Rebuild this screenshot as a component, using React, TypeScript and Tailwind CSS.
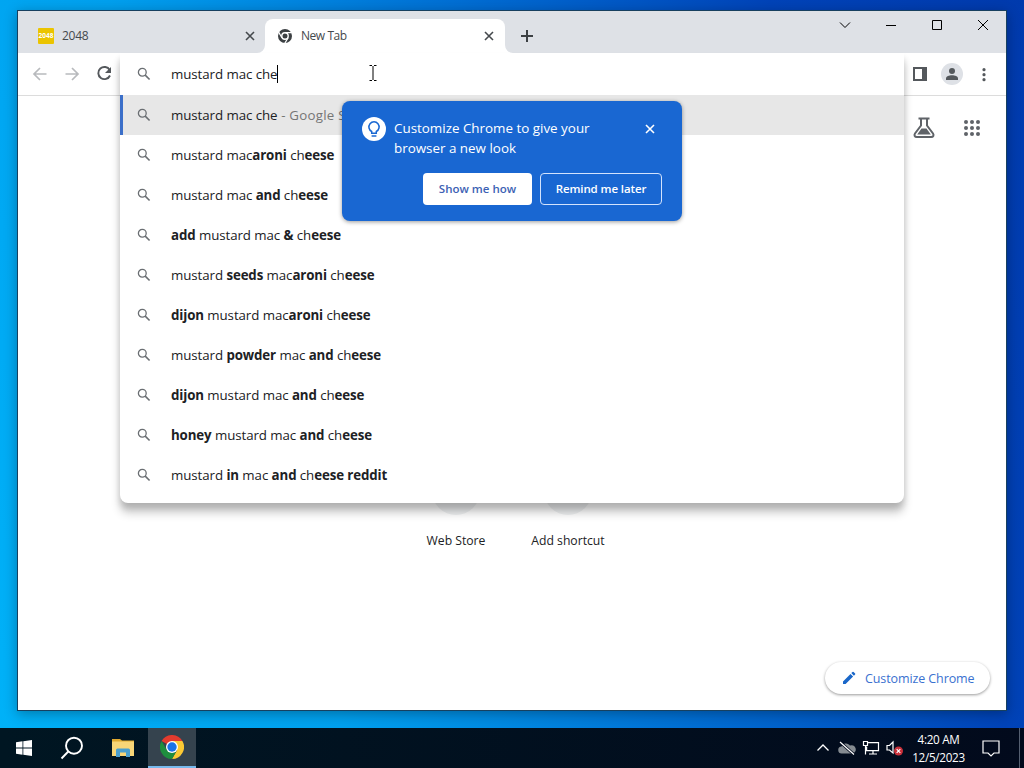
import type { ReactNode } from 'react'

type Part = string | { b: string }

const suggestions: Part[][] = [
  ['mustard mac', { b: 'aroni' }, ' ch', { b: 'eese' }],
  ['mustard mac ', { b: 'and' }, ' ch', { b: 'eese' }],
  [{ b: 'add' }, ' mustard mac ', { b: '&' }, ' ch', { b: 'eese' }],
  ['mustard ', { b: 'seeds' }, ' mac', { b: 'aroni' }, ' ch', { b: 'eese' }],
  [{ b: 'dijon' }, ' mustard mac', { b: 'aroni' }, ' ch', { b: 'eese' }],
  ['mustard ', { b: 'powder' }, ' mac ', { b: 'and' }, ' ch', { b: 'eese' }],
  [{ b: 'dijon' }, ' mustard mac ', { b: 'and' }, ' ch', { b: 'eese' }],
  [{ b: 'honey' }, ' mustard mac ', { b: 'and' }, ' ch', { b: 'eese' }],
  ['mustard ', { b: 'in' }, ' mac ', { b: 'and' }, ' ch', { b: 'eese reddit' }],
]

function SearchIcon() {
  return (
    <svg className="size-4 shrink-0" viewBox="0 0 16 16" fill="none" stroke="#6a6e72" strokeWidth="1.3">
      <circle cx="6.3" cy="6.2" r="3.9" />
      <path d="M9.2 9.1 13.6 13.5" strokeWidth="1.6" />
    </svg>
  )
}

function CloseIcon({ className = '' }: { className?: string }) {
  return (
    <svg className={`size-4 shrink-0 ${className}`} viewBox="0 0 16 16" fill="none" stroke="currentColor" strokeWidth="1.6">
      <path d="m4 4 8 8M12 4l-8 8" />
    </svg>
  )
}

function GreyChrome() {
  return (
    <svg className="size-4 shrink-0" viewBox="0 0 16 16">
      <circle cx="8" cy="8" r="7" fill="#3c4043" />
      <circle cx="8" cy="8" r="3.2" fill="#3c4043" stroke="#fff" strokeWidth="1.4" />
      <path d="M8 4.6h7M4.9 9.8 1.5 3.9M11.1 9.8 7.6 15.6" stroke="#fff" strokeWidth="1.2" />
    </svg>
  )
}

function ChromeLogo() {
  return (
    <svg className="size-6" viewBox="0 0 24 24">
      <path d="M12 12 1.6 6A12 12 0 0 1 22.4 6Z" fill="#e33b2e" />
      <path d="M12 6h10.4A12 12 0 0 1 12 24l5.2-9Z" fill="#fcc934" />
      <path d="M1.6 6 6.8 15 12 18l4.2-1.6L12 24A12 12 0 0 1 1.6 6Z" fill="#1e8e3e" />
      <circle cx="12" cy="12" r="6" fill="#fff" />
      <circle cx="12" cy="12" r="4.7" fill="#1a73e8" />
    </svg>
  )
}

function Caption({ children }: { children: ReactNode }) {
  return (
    <div className="flex w-[46px] justify-center pt-[6px]">
      <svg className="size-4" viewBox="0 0 16 16" fill="none" stroke="currentColor" strokeWidth="1">
        {children}
      </svg>
    </div>
  )
}

function TabStrip() {
  return (
    <div className="flex h-[42px] shrink-0 bg-[#dee1e6] text-[12px] text-[#45494d]">
      <div className="flex w-[247px] items-center pt-2 pr-[7px] pl-5">
        <div className="flex size-4 items-center justify-center overflow-hidden rounded-[1px] bg-[#ebc400] text-[6.5px] font-bold text-white">
          2048
        </div>
        <span className="ml-2 flex-1 tracking-[-0.25px]">2048</span>
        <CloseIcon />
      </div>
      <div className="relative mt-2 flex w-[240px] items-center rounded-t-lg bg-white pr-2 pl-3">
        <svg className="absolute bottom-0 -left-2 size-2" viewBox="0 0 8 8">
          <path d="M8 0v8H0a8 8 0 0 0 8-8Z" fill="#fff" />
        </svg>
        <svg className="absolute -right-2 bottom-0 size-2" viewBox="0 0 8 8">
          <path d="M0 0v8h8a8 8 0 0 1-8-8Z" fill="#fff" />
        </svg>
        <GreyChrome />
        <span className="ml-2 flex-1 tracking-[-0.45px]">New Tab</span>
        <CloseIcon />
      </div>
      <svg className="mt-[17px] ml-[14px] size-4" viewBox="0 0 16 16" stroke="#3c4043" strokeWidth="2">
        <path d="M8 2v12M2 8h12" />
      </svg>
      <div className="ml-auto flex h-7 text-black">
        <Caption>
          <path d="m3 5.5 5 5 5-5" />
        </Caption>
        <Caption>
          <path d="M3 8.5h10" />
        </Caption>
        <Caption>
          <path d="M3.5 3.5h9v9h-9z" />
        </Caption>
        <Caption>
          <path d="m3 3 10 10M13 3 3 13" />
        </Caption>
      </div>
    </div>
  )
}

function Toolbar() {
  return (
    <div className="flex h-[43px] shrink-0 items-center border-b border-[#dcdcdc] bg-white pl-[13px]">
      <svg className="size-[18px]" viewBox="0 0 18 18" fill="none" stroke="#b8babd" strokeWidth="1.7">
        <path d="M15.5 9H3M9 3 3 9l6 6" />
      </svg>
      <svg className="ml-[14px] size-[18px]" viewBox="0 0 18 18" fill="none" stroke="#b8babd" strokeWidth="1.7">
        <path d="M2.5 9H15M9 3l6 6-6 6" />
      </svg>
      <svg className="ml-[14px] size-[18px]" viewBox="0 0 18 18" fill="none" stroke="#54585c" strokeWidth="1.9">
        <path d="M14.7 5A6.1 6.1 0 1 0 15 10.5" />
        <path d="M16 2v6h-6Z" fill="#54585c" stroke="none" />
      </svg>
      <svg className="ml-auto h-[14px] w-[14px]" viewBox="0 0 14 14">
        <path d="M0 0h14v14H0zM2 2v10h7V2z" fill="#54585c" fillRule="evenodd" />
      </svg>
      <div className="ml-[14px] flex size-[22px] items-center justify-center rounded-full bg-[#dee1e6]">
        <svg className="size-3" viewBox="0 0 12 12" fill="#54585c">
          <circle cx="6" cy="3" r="3" />
          <path d="M0 12v-1.5C0 8.3 3 7.3 6 7.3s6 1 6 3.2V12Z" />
        </svg>
      </div>
      <svg className="mr-[14px] ml-[13px] size-4" viewBox="0 0 16 16" fill="#54585c">
        <circle cx="8" cy="3.7" r="1.6" />
        <circle cx="8" cy="8.7" r="1.6" />
        <circle cx="8" cy="13.7" r="1.6" />
      </svg>
    </div>
  )
}

function Omnibox() {
  return (
    <div className="absolute top-[42px] left-[102px] w-[784px] rounded-b-lg bg-white pb-2 text-[13.3px] tracking-[-0.07px] text-[#202124] shadow-[0_10px_10px_rgba(0,0,0,0.2),0_5px_6px_rgba(0,0,0,0.14)]">
      <div className="flex h-[42px] items-center pl-4">
        <SearchIcon />
        <span className="ml-[19px] pt-0.5 whitespace-nowrap">mustard mac che</span>
        <span className="h-[18px] w-px bg-black" />
      </div>
      <div className="flex h-10 items-center border-l-3 border-[#3b6fc9] bg-[#e7e7e7] pl-[13px]">
        <SearchIcon />
        <span className="ml-[19px] pt-0.5 whitespace-pre">
          mustard mac che<span className="tracking-[0.25px] text-[#757575]"> - Google Search</span>
        </span>
      </div>
      {suggestions.map((parts, i) => (
        <div key={i} className="flex h-10 items-center pl-4">
          <SearchIcon />
          <span className="ml-[19px] pt-0.5 whitespace-pre">
            {parts.map((p, j) =>
              typeof p === 'string' ? p : <b key={j} className="font-bold tracking-[-0.12px]">{p.b}</b>
            )}
          </span>
        </div>
      ))}
    </div>
  )
}

function Promo() {
  return (
    <div className="absolute top-[90px] left-[324px] h-[120px] w-[340px] rounded-lg bg-[#1967d2] px-5 pt-4 text-white shadow-[0_1px_4px_rgba(0,0,0,0.4)]">
      <div className="flex">
        <div className="flex size-6 items-center justify-center rounded-full bg-white">
          <svg className="size-5" viewBox="0 0 20 20" fill="none" stroke="#1967d2" strokeWidth="1.5">
            <path d="M7.7 12.5v1.7h4.6v-1.7a5.1 5.1 0 1 0-4.6 0Z" />
            <path d="M7.6 17h4.8" />
          </svg>
        </div>
        <p className="mt-px ml-2 flex-1 text-[13.4px] leading-5 whitespace-pre">{'Customize Chrome to give your\nbrowser a new look'}</p>
        <CloseIcon className="mt-1 mr-1" />
      </div>
      <div className="mt-[15px] flex justify-end gap-2 text-[11.5px] font-semibold">
        <div className="flex h-8 w-[109px] items-center justify-center rounded bg-white text-[#3c62b4]">
          Show me how
        </div>
        <div className="flex h-8 w-[122px] items-center justify-center rounded border border-[#d3e3fd] tracking-[-0.1px]">
          Remind me later
        </div>
      </div>
    </div>
  )
}

function Shortcut({ label }: { label: string }) {
  return (
    <div className="flex w-28 flex-col items-center">
      <div className="size-12 rounded-full bg-[#eff1f2]" />
      <span className="mt-[17px] leading-[18px] whitespace-nowrap">{label}</span>
    </div>
  )
}

function NewTabPage() {
  return (
    <div className="flex flex-1 flex-col bg-white text-[12.2px] text-[#202124]">
      <div className="flex items-center justify-end gap-6 pt-5 pr-[22px]">
        <svg className="size-6" viewBox="0 0 24 24" fill="none" stroke="#5f6368" strokeWidth="2">
          <path d="M6.5 2.5h11M9 3v6.5L3 17.5C1.8 19.5 2.8 21 4.8 21h14.4c2 0 3-1.5 1.8-3.500L15 9.5V3" />
          <path d="M9.5 12.5h5l4.3 6H5.2Z" fill="#5f6368" stroke="none" />
        </svg>
        <svg className="size-6" viewBox="0 0 24 24" fill="#5f6368">
          {[6, 12, 18].map((y) => [6, 12, 18].map((x) => <circle key={`${x}-${y}`} cx={x} cy={y} r="2" />))}
        </svg>
      </div>
      <div className="mt-[327px] ml-[382px] flex">
        <Shortcut label="Web Store" />
        <Shortcut label="Add shortcut" />
      </div>
      <div className="mt-auto mr-4 mb-4 flex h-8 w-[165px] items-center self-end rounded-full bg-white pl-4 text-[#3a71d0] shadow-[0_1px_3px_rgba(0,0,0,0.4)]">
        <svg className="size-4" viewBox="0 0 16 16" fill="#1a67c9">
          <path d="M2 11.4V14h2.6l7.5-7.5-2.6-2.6ZM10.3 3.1l2.6 2.6 1.2-1.2a.8.8 0 0 0 0-1.1l-1.5-1.5a.8.8 0 0 0-1.1 0Z" />
        </svg>
        <span className="ml-2 pt-[3px] text-[12.5px] tracking-[-0.1px] whitespace-nowrap">Customize Chrome</span>
      </div>
    </div>
  )
}

function Taskbar() {
  return (
    <div className="flex h-10 shrink-0 items-center bg-linear-to-r from-[#001622] to-[#020a1c] text-white">
      <div className="flex w-12 justify-center">
        <svg className="size-4" viewBox="0 0 16 16" fill="#fff">
          <path d="M0 2.2 6.5 1.3v6.3H0ZM7.3 1.2 16 0v7.6H7.3ZM0 8.4h6.5v6.3L0 13.8ZM7.3 8.4H16V16l-8.7-1.2Z" />
        </svg>
      </div>
      <div className="flex w-12 justify-center">
        <svg className="size-6" viewBox="0 0 24 24" fill="none" stroke="#fff" strokeWidth="1.9">
          <circle cx="14" cy="9.7" r="8" />
          <path d="M8.3 15.5 1.5 22.5" />
        </svg>
      </div>
      <div className="flex w-[52px] justify-center pl-[2px]">
        <svg className="h-5 w-[22px]" viewBox="0 0 22 20">
          <path d="M0 1h8l2 1.5h12V5H0Z" fill="#e0a92f" />
          <path d="M0 3.5h22V18H0Z" fill="#f8d677" />
          <path d="M4 19v-7q0-1.5 1.5-1.5h11q1.5 0 1.5 1.5v7h-4v-4.5H8V19Z" fill="#4a9fce" />
        </svg>
      </div>
      <div className="flex h-10 w-12 items-center justify-center border-b-2 border-[#76b9ed] bg-[#35434e]">
        <ChromeLogo />
      </div>
      <div className="ml-auto flex items-center">
        <svg className="h-4 w-[14px]" viewBox="0 0 14 16" fill="none" stroke="#fff" strokeWidth="1.3">
          <path d="m1.5 10.5 5.5-5.5 5.5 5.5" />
        </svg>
        <svg className="ml-2 h-4 w-[18px]" viewBox="0 0 18 16">
          <path d="M4 13.5a3.5 3.5 0 0 1-.5-7A5 5 0 0 1 12 5.5a4 4 0 0 1 3 8Z" fill="#858b91" />
          <path d="M2 2 16 14.5" stroke="#020a1c" strokeWidth="3" />
          <path d="M2 2 16 14.5" stroke="#fff" strokeWidth="1.2" />
        </svg>
        <svg className="ml-[6px] h-4 w-[18px]" viewBox="0 0 18 16" fill="none" stroke="#fff" strokeWidth="1.2">
          <path d="M6 2.6h10.5v8H4.6V6.5M11 10.6V14M7 14h8M1.5 1.5h4v4h-4ZM3.5 5.5v9" />
        </svg>
        <svg className="ml-[6px] h-4 w-[18px]" viewBox="0 0 18 16" fill="none" stroke="#fff" strokeWidth="1.2">
          <path d="M1 5.5h2.5L7 2v11L3.5 10H1Z" />
          <circle cx="12.5" cy="11" r="4.5" fill="#c9303a" stroke="none" />
          <path d="m10.7 9.2 3.6 3.6M14.3 9.2l-3.6 3.6" />
        </svg>
        <div className="w-[70px] pr-px text-center text-[11.7px] leading-[18px] tracking-[-0.3px]">
          <div>4:20 AM</div>
          <div>12/5/2023</div>
        </div>
        <svg className="ml-[8px] size-[18px]" viewBox="0 0 18 18" fill="none" stroke="#fff" strokeWidth="1.2">
          <path d="M1 2h16v12h-5l-3 3-3-3H1Z" />
        </svg>
        <div className="ml-[19px] h-10 w-px bg-[#555f70]" />
        <div className="w-1" />
      </div>
    </div>
  )
}

export default function App() {
  return (
    <div className="flex h-[768px] w-[1024px] flex-col overflow-hidden bg-[linear-gradient(72deg,#00b2f8_0%,#00a0ee_28%,#006fd4_55%,#0043b8_80%,#003aad_100%)] font-['Open_Sans','Noto_Sans',sans-serif]">
      <div className="h-[728px] pt-[10px] pl-[17px]">
        <div className="relative flex h-[701px] w-[990px] flex-col border border-[#17405f] shadow-[0_3px_12px_rgba(0,0,0,0.3)]">
          <TabStrip />
          <Toolbar />
          <NewTabPage />
          <Omnibox />
          {/* text cursor over the address bar */}
          <svg className="absolute top-[53px] left-[351px] h-[18px] w-2" viewBox="0 0 8 18" fill="none" stroke="#000">
            <path d="M.5 1.5H3M5 1.5h2.5M4 2v14M.5 16.5H3M5 16.5h2.5" />
          </svg>
          <Promo />
        </div>
      </div>
      <Taskbar />
    </div>
  )
}
